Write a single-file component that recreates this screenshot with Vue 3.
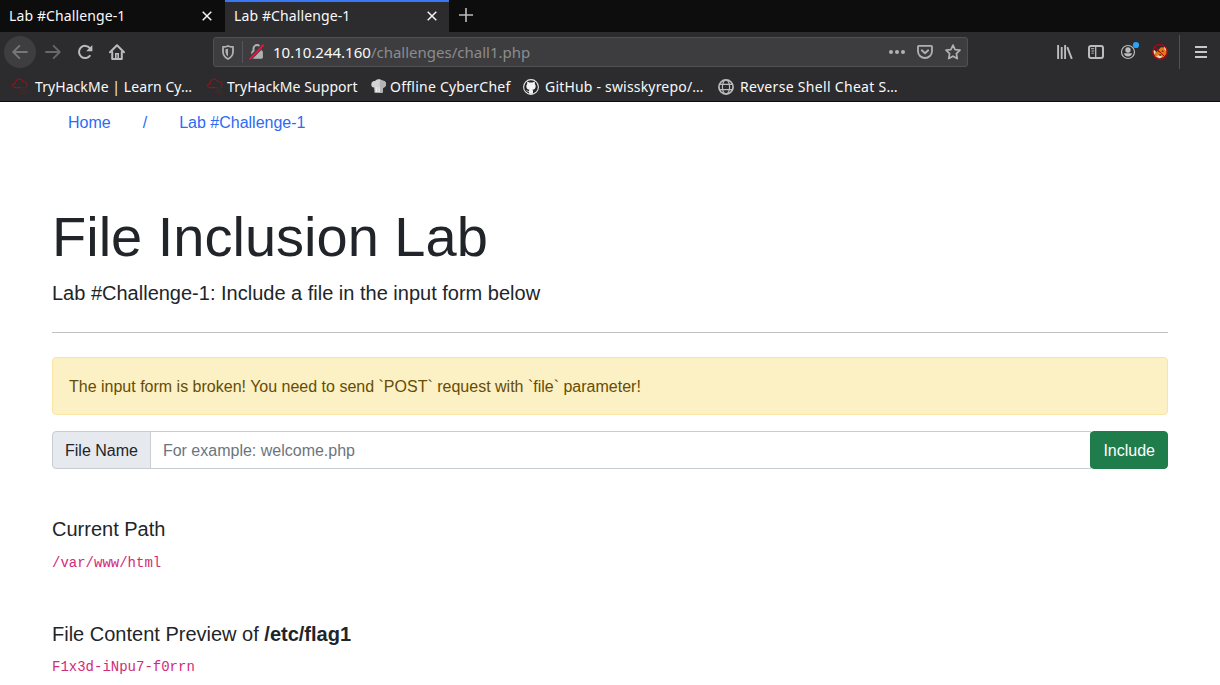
<script setup>
const tabs = [
  { title: 'Lab #Challenge-1', active: false },
  { title: 'Lab #Challenge-1', active: true },
]

const bookmarks = [
  { label: 'TryHackMe | Learn Cy…', icon: 'cloud', cls: 'b1' },
  { label: 'TryHackMe Support', icon: 'cloud', cls: 'b2' },
  { label: 'Offline CyberChef', icon: 'chef', cls: 'b3' },
  { label: 'GitHub - swisskyrepo/…', icon: 'github', cls: 'b4' },
  { label: 'Reverse Shell Cheat S…', icon: 'globe', cls: 'b5' },
]
</script>

<template>
  <div class="window">
    <header class="chrome">
      <div class="tabs">
        <div v-for="(tab, i) in tabs" :key="i" class="tab" :class="{ active: tab.active }">
          <span class="tab-title">{{ tab.title }}</span>
          <svg class="close" width="10" height="10" viewBox="0 0 10 10"><path d="M.7.7l8.6 8.6M9.3.7L.7 9.3" stroke="#f4f4f4" stroke-width="1.5" fill="none" /></svg>
        </div>
        <svg class="plus" width="14" height="14" viewBox="0 0 14 14"><path d="M7 0v14M0 7h14" stroke="#bcbcbd" stroke-width="1.6" fill="none" /></svg>
      </div>

      <div class="toolbar">
        <div class="nav-buttons">
          <span class="back">
            <svg width="16" height="16" viewBox="0 0 16 16" fill="none" stroke="#77777a" stroke-width="1.8" stroke-linecap="round" stroke-linejoin="round"><path d="M15 8H1.2M7.4 1.8L1.2 8l6.2 6.2" /></svg>
          </span>
          <svg width="16" height="16" viewBox="0 0 16 16" fill="none" stroke="#68686a" stroke-width="1.8" stroke-linecap="round" stroke-linejoin="round"><path d="M1 8h13.8M8.6 1.8L14.8 8l-6.2 6.2" /></svg>
          <svg width="16" height="16" viewBox="0 0 16 16" fill="none" stroke="#bcbcbd" stroke-width="2"><path d="M13.3 11.2A6.1 6.1 0 1 1 13 4.3" /><path d="M15.4 1v6.2H9.2z" fill="#bcbcbd" stroke="none" /></svg>
          <svg width="16" height="16" viewBox="0 0 16 16" fill="none" stroke="#bcbcbd" stroke-width="2" stroke-linejoin="round" stroke-linecap="round"><path d="M1 8.2L8 1.2l7 7" /><path d="M3.2 8v6.9h9.6V8" /><path d="M6.8 14.5V9.8h2.4v4.7" stroke-width="1.6" stroke-linejoin="miter" /></svg>
        </div>

        <div class="urlbar">
          <svg class="shield" width="12" height="15" viewBox="0 0 12 15"><path d="M6 1C4.4 1.8 2.7 2 1 2v4.6C1 10.200 3 12.600 6 14c3-1.400 5-3.800 5-7.400V2c-1.700 0-3.400-.2-5-1z" fill="none" stroke="#b1b1b3" stroke-width="1.8" stroke-linejoin="round" /><path d="M6 3.700v7.600C4.300 10.200 3.500 8.600 3.500 6.400V4.200c.9 0 1.700-.2 2.500-.5z" fill="#b1b1b3" /></svg>
          <span class="split"></span>
          <svg class="lock" width="16" height="16" viewBox="0 0 16 16"><path d="M4.500 7V4.600a3.500 3.500 0 0 1 7 0V7" fill="none" stroke="#b1b1b3" stroke-width="2" /><rect x="2.300" y="6.700" width="11.600" height="8" rx="1.400" fill="#b1b1b3" /><path d="M.8 14.900L14 1.200" stroke="#3d3d3f" stroke-width="4" /><path d="M1.100 14.900L14.300 1.200" stroke="#f5103e" stroke-width="1.800" stroke-linecap="round" /></svg>
          <span class="url"><span class="host">10.10.244.160</span><span class="path">/challenges/chall1.php</span></span>
          <svg class="dots" width="16" height="16" viewBox="0 0 16 16" fill="#b1b1b3"><circle cx="2" cy="8" r="2" /><circle cx="8" cy="8" r="2" /><circle cx="14" cy="8" r="2" /></svg>
          <svg class="pocket" width="16" height="16" viewBox="0 0 16 16" fill="none" stroke="#b1b1b3" stroke-linecap="round" stroke-linejoin="round"><path d="M1.900 1.900h12.200q.9 0 .9.900V7.200a7 6.800 0 0 1-14 0V2.800q0-.9.900-.9z" stroke-width="1.800" /><path d="M4.800 6.300L8 9.300l3.200-3" stroke-width="1.900" /></svg>
          <svg class="star" width="16" height="16" viewBox="0 0 16 16" fill="none" stroke="#b1b1b3" stroke-width="1.700" stroke-linejoin="round"><path d="M8 1.100l2.100 4.500 4.900.6-3.600 3.400.9 5L8 12.200l-4.300 2.400.9-5L1 6.200l4.900-.6z" /></svg>
        </div>

        <div class="tools">
          <svg class="library" width="16" height="16" viewBox="0 0 16 16" stroke="#bcbcbd" stroke-width="1.900" fill="none"><path d="M1.100 1v14M4.700 3v12M8.100 1v14" /><path d="M10.300 3.200l4.500 11.600" /></svg>
          <svg class="sidebar" width="16" height="16" viewBox="0 0 16 16" fill="none" stroke="#bcbcbd"><rect x="1" y="2" width="14" height="12" rx="2" stroke-width="2" /><path d="M7.700 2v12" stroke-width="1.300" /><path d="M3 4.700h3.200M3.500 7h2.700M3.500 9.200h2.200" stroke-width="1" /></svg>
          <svg class="account" width="20" height="20" viewBox="0 0 20 20"><circle cx="8" cy="12" r="6.500" fill="none" stroke="#bcbcbd" stroke-width="1.200" /><circle cx="8" cy="10" r="2.700" fill="#bcbcbd" /><path d="M3.800 13.200h8.400c-.6 2-2.200 3.300-4.200 3.300s-3.600-1.300-4.200-3.300z" fill="#bcbcbd" /><circle cx="16" cy="5" r="3.100" fill="#28a4fb" /></svg>
          <svg class="fox" width="16" height="16" viewBox="0 0 16 16"><path d="M1.500 6l3 2L7 5.200l2-2 3.500.3L15 5.500l-.5 4-2.500 3.500-4 1.500-4.500-1.500L2 10z" fill="#e07a12" /><path d="M1.200 5.200l2.500 2L3 10.500 1.600 9zM11.800 2.300l2.500 1.500.7 3.200-2.200-1zM4 12.200l3.200-1.200 3 1.500-2.500 2z" fill="#ded8d4" /><path d="M6.300 7.200l1.500.8M10.200 6.800l1 1M7.300 11h1.600" stroke="#4a2a18" stroke-width="1.300" /><circle cx="8" cy="8" r="7.300" fill="none" stroke="#b80510" stroke-width="1.200" /><path d="M2.700 2.900l10.500 10.300" stroke="#b80510" stroke-width="1" /></svg>
          <span class="divider"></span>
          <svg class="menu" width="12" height="12" viewBox="0 0 12 12"><path d="M0 1h12M0 6h12M0 11h12" stroke="#c8c8c9" stroke-width="1.900" /></svg>
        </div>
      </div>

      <nav class="bookmarks">
        <span v-for="b in bookmarks" :key="b.label" class="bookmark" :class="b.cls">
          <svg v-if="b.icon === 'cloud'" width="16" height="16" viewBox="0 0 16 16" fill="none" stroke="#a01016" stroke-width="1.100"><path d="M8 8.600H3C-.1 8.200-.1 4.800 3 4.600 3.400 2 4.900.1 7.300.1c2 0 3.200 1 3.700 2.700 2.500-.2 4 1.100 4 3 0 .8-.3 1.400-.8 1.900" stroke-dasharray="3 .4" /><path d="M8.500 8.600h2.700M13 8.500h2M9.500 10.500h4M8 13h2.500M12.500 12.700h3M11 15h2" stroke="#6c1a1e" /></svg>
          <svg v-else-if="b.icon === 'chef'" width="16" height="16" viewBox="0 0 16 16"><path d="M3.200 8.600C.6 8.300 0 6.700.4 4.500.8 2.600 2.400 1.600 4 2c1.500-2 5.500-2.200 7-.4 1.900-.3 3.600.8 4 2.700.4 2.400-.8 4-2.900 4.500l-.5 5H3.600z" fill="#d2d2d2" /><path d="M9 1.200l2 .6c2-.2 3.800 1 3.900 3.200 0 2-1 3.300-2.800 3.800l-.5 5H8.500z" fill="#b4b4b4" /><path d="M5.200 8l.5 5M8.200 8v5" stroke="#eee" /></svg>
          <svg v-else-if="b.icon === 'github'" width="16" height="16" viewBox="0 0 16 16"><circle cx="8" cy="8" r="7.400" fill="#252527" stroke="#e8e8e8" stroke-width="1.100" /><path d="M6 14.800v-2c-2 .3-2-1-3-1.500 1.300-.2 1.600 1.100 3 .7 0-.5.200-.9.500-1.200C4.400 10.500 3.300 9.300 3.300 7c0-.9.300-1.500.9-2.100-.2-.7-.2-1.500.1-2.200.8 0 1.500.4 2.100.9 1-.2 2.200-.2 3.200 0 .6-.5 1.300-.9 2.100-.9.300.7.300 1.500.1 2.200.6.600.9 1.200.9 2.100 0 2.300-1.100 3.500-3.200 3.800.4.400.5.900.5 1.600v2.400z" fill="#f3f3f3" /></svg>
          <svg v-else width="16" height="16" viewBox="0 0 16 16" fill="none" stroke="#bcbcbd"><circle cx="8" cy="8" r="7.100" stroke-width="1.700" /><ellipse cx="8" cy="8" rx="3.600" ry="7" stroke-width="1.200" /><path d="M1.700 5.300h12.600M1.700 10.700h12.600" stroke-width="1.300" /></svg>
          <span class="label">{{ b.label }}</span>
        </span>
      </nav>
    </header>

    <main class="page">
      <nav class="crumbs">
        <a>Home</a><a>/</a><a>Lab #Challenge-1</a>
      </nav>
      <h1>File Inclusion Lab</h1>
      <p class="lead">Lab #Challenge-1: Include a file in the input form below</p>
      <hr />
      <div class="alert">The input form is broken! You need to send `POST` request with `file` parameter!</div>
      <form class="input-group" @submit.prevent>
        <span class="addon">File Name</span>
        <input type="text" placeholder="For example: welcome.php" />
        <button type="submit">Include</button>
      </form>
      <section class="current">
        <h5>Current Path</h5>
        <div><code>/var/www/html</code></div>
      </section>
      <section class="preview">
        <h5>File Content Preview of <b>/etc/flag1</b></h5>
        <div><code>F1x3d-iNpu7-f0rrn</code></div>
      </section>
    </main>
  </div>
</template>

<style>
body { margin: 0; background: #fff; overflow: hidden; }
</style>

<style scoped>
* { box-sizing: border-box; }
.window { width: 100%; height: 685px; overflow: hidden; }
svg { display: block; flex: none; overflow: visible; }

.chrome {
  height: 102px;
  background: #2c2c2e;
  border-bottom: 1px solid #0c0c0d;
  color: #f9f9fa;
  font: 14px/20px "Noto Sans", "Open Sans", sans-serif;
  white-space: nowrap;
}
.tabs { height: 32px; display: flex; background: #0d0d0e; }
.tab { width: 225px; padding: 0 13px 0 9px; display: flex; align-items: center; justify-content: space-between; }
.tab.active { width: 224px; padding-right: 12px; background: #2c2c2e; box-shadow: inset 0 2px #3878f5; }
.tab-title { letter-spacing: .11px; }
.plus { margin: 8px 0 0 10px; }

.toolbar { height: 40px; display: flex; align-items: center; }
.nav-buttons { width: 213px; padding-left: 4px; display: flex; align-items: center; gap: 16px; }
.back { width: 32px; height: 32px; margin-right: -7px; border-radius: 50%; background: #3e3e40; display: flex; align-items: center; justify-content: center; }
.urlbar { width: 755px; height: 30px; padding: 0 6px 0 8px; display: flex; align-items: center; background: #3d3d3f; border: 1px solid #505052; border-radius: 3px; }
.split { width: 1px; height: 22px; margin: 0 6px 0 8px; background: #55555b; }
.url { flex: 1; margin-left: 8px; font-size: 15px; }
.path { color: #8c8c8e; }
.pocket { margin-left: 12px; }
.star { margin-left: 12px; }
.tools { flex: 1; padding-left: 89px; display: flex; align-items: center; }
.sidebar { margin-left: 15px; }
.account { margin: -4px 0 0 16px; }
.fox { margin-left: 12px; }
.divider { width: 1px; height: 34px; margin: 0 15px 0 11px; background: #505052; }

.bookmarks { height: 29px; padding: 0 0 0 12px; display: flex; align-items: center; }
.bookmark { display: flex; align-items: center; gap: 7px; }
.b1 { width: 195px; letter-spacing: .07px; }
.b2 { width: 164px; gap: 4px; letter-spacing: .06px; }
.b3 { width: 152px; gap: 3px; letter-spacing: .24px; }
.b4 { width: 195px; gap: 6px; letter-spacing: .19px; }
.b5 { gap: 6px; letter-spacing: .31px; }

.page { padding: 0 52px; color: #212529; font: 16px/24px "Liberation Sans", Arial, sans-serif; }
.crumbs { height: 41px; display: flex; color: #2b6bf6; }
.crumbs a { padding: 9px 16px 8px; }
h1 { margin: 60px 0 8px; font-size: 56px; font-weight: 400; line-height: 67px; }
.lead { margin: 0 0 24px; font-size: 20px; line-height: 30px; }
hr { height: 1px; margin: 0 0 24px; border: 0; background: #c0c0c2; }
.alert { height: 58px; padding: 17px 16px 15px; margin-bottom: 16px; color: #664d03; background: #fcf0c5; border: 1px solid #fae5a5; border-radius: 4px; }
.input-group { display: flex; height: 38px; margin: 0; }
.addon { padding: 7px 12px 5px; background: #e6e9ee; border: 1px solid #c7cdd4; border-radius: 4px 0 0 4px; }
input { flex: 1; min-width: 0; margin-left: -1px; padding: 7px 12px 5px; font: inherit; color: inherit; border: 1px solid #c7cdd4; border-radius: 0; background: #fff; outline: 0; }
input::placeholder { color: #6c757d; opacity: 1; }
button { margin-left: -1px; padding: 7px 12px 5px; font: inherit; color: #fff; background: #1f7c4b; border: 1px solid #1f7c4b; border-radius: 4px; }
.current { margin-top: 48px; }
.current h5 { margin-bottom: 9px; }
.preview { margin-top: 47px; }
h5 { margin: 0 0 8px; font-size: 20px; font-weight: 400; line-height: 24px; }
code { font-family: "Liberation Mono", monospace; font-size: 14px; color: #d12a7a; }
</style>
